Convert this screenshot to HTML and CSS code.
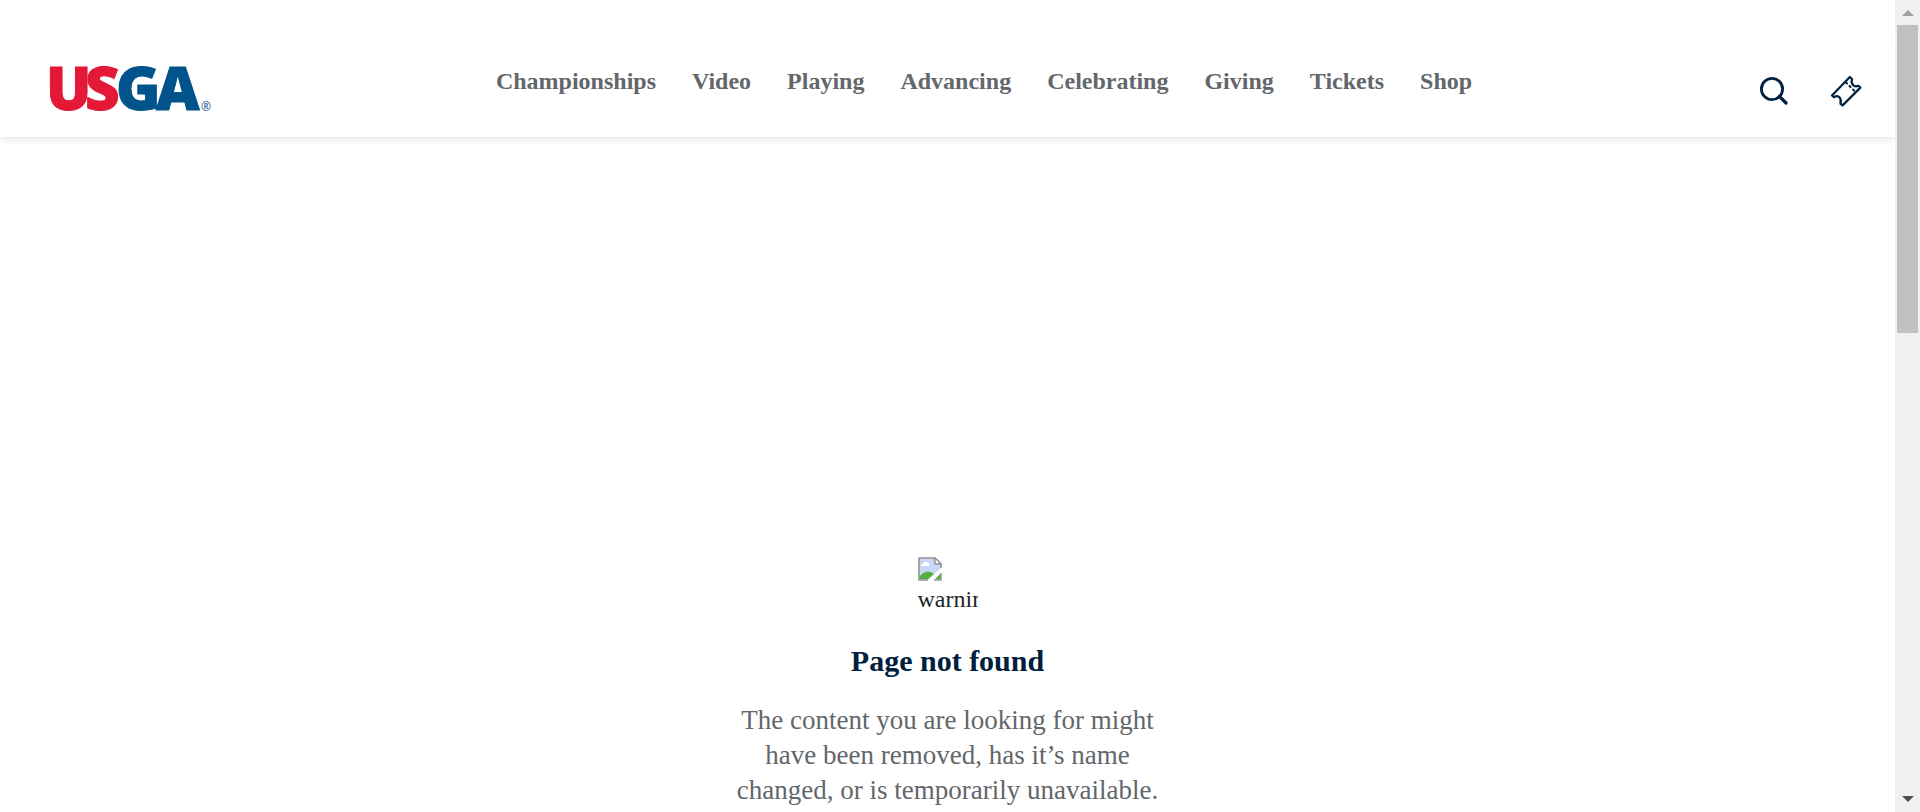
FILE: index.html
```html
<!DOCTYPE html>
<html lang="en">
<head>
<meta charset="utf-8">
<meta name="viewport" content="width=device-width, initial-scale=1">
<title>Page not found | USGA</title>
<link rel="stylesheet" href="styles.css">
</head>
<body>
<div class="page">
  <header class="header">
    <a class="logo" href="#" aria-label="USGA home">
      <svg class="logo-mark" viewBox="0 0 162 48">
        <text class="logo-blue" x="67 107" y="45">GA</text>
        <text class="logo-red" x="-3 36" y="45">US</text>
        <text class="logo-reg" x="152" y="46">®</text>
      </svg>
    </a>
    <nav class="nav" aria-label="Main">
      <a href="#">Championships</a>
      <a href="#">Video</a>
      <a href="#">Playing</a>
      <a href="#">Advancing</a>
      <a href="#">Celebrating</a>
      <a href="#">Giving</a>
      <a href="#">Tickets</a>
      <a href="#">Shop</a>
    </nav>
    <div class="actions">
      <button class="icon-button" type="button" aria-label="Search">
        <svg viewBox="0 0 32 32"><circle cx="14" cy="14" r="10.6" stroke-width="2.8"/><path d="M21.5 21.5 L28 28" stroke-width="3.2"/></svg>
      </button>
      <a class="icon-button" href="#" aria-label="Tickets">
        <svg viewBox="0 0 32 32"><path stroke-width="2.2" d="M19.8 2 L2 20.4 L4 22.2 Q7.4 20.2 9.6 22.4 Q11.6 24.6 10.4 28.6 L12.6 30.4 L30.4 12.6 L28.4 10.8 Q25.2 12.2 23 10 Q20.8 7.6 22 4 Z"/><path stroke-width="2" stroke-dasharray="1.5 3.5" d="M16 7.5 L24.5 16"/></svg>
      </a>
    </div>
  </header>
  <main class="message">
    <div class="missing" role="img" aria-label="warning">
      <svg class="missing-icon" viewBox="0 0 24 24">
        <path d="M1 1H17L23 7V23H1Z" fill="#c6d8f6"/>
        <path d="M3 9Q3 7 5 7Q6 4 9 5Q12 6 11 9Z" fill="#fff"/>
        <path d="M2 22V19Q9 11 16 17L10 22Z" fill="#55ad3c"/>
        <path d="M17 22L22 17V22Z" fill="#55ad3c"/>
        <path d="M9 24L24 10V15L15 24Z" fill="#fff"/>
        <path d="M10 23H1V1H17L23 7V11M23 16V23H16" fill="none" stroke="#949494" stroke-width="1.6"/>
        <path d="M17 1V7H23Z" fill="#fff" stroke="#949494" stroke-width="1.4"/>
      </svg>
      <span class="missing-text">warning</span>
    </div>
    <h1 class="title">Page not found</h1>
    <p class="copy">The content you are looking for might have been removed, has it’s name changed, or is temporarily unavailable.</p>
  </main>
</div>
<div class="scrollbar" aria-hidden="true">
  <svg class="arrow arrow-up" viewBox="0 0 12 6"><path d="M6 0L12 6H0Z"/></svg>
  <div class="track"><div class="thumb"></div></div>
  <svg class="arrow" viewBox="0 0 12 6"><path d="M0 0H12L6 6Z"/></svg>
</div>
</body>
</html>
```

FILE: styles.css
```css
* { box-sizing: border-box; }

body {
  margin: 0;
  height: 100vh;
  overflow: hidden;
  display: grid;
  grid-template-columns: minmax(0, 1fr) 25px;
  background: #fff;
  color: #212529;
  font: 24px/36px "Liberation Serif", "Times New Roman", serif;
}

a { color: inherit; text-decoration: none; }

.page { min-height: 0; overflow: hidden; padding-top: 41px; }

.header {
  display: grid;
  grid-template-columns: 1fr auto 1fr;
  align-items: center;
  height: 96px;
  padding: 0 33px 0 49px;
  box-shadow: 0 3px 6px rgba(0, 0, 0, 0.09);
}

.logo { display: block; }
.logo-mark { display: block; width: 162px; height: 48px; overflow: visible; }
.logo-mark text { font-family: "Open Sans", sans-serif; font-weight: 800; font-size: 60px; }
.logo-mark .logo-red { fill: #e31937; stroke: #e31937; }
.logo-mark .logo-blue { fill: #00538b; stroke: #00538b; }
.logo-mark .logo-reg { fill: #00538b; font-size: 12px; font-weight: 400; }

.nav {
  display: flex;
  gap: 36px;
  padding: 0 0 16px 57px;
  color: #63666a;
  font-weight: 700;
}

.actions {
  display: flex;
  justify-content: flex-end;
  gap: 40px;
  padding-top: 4px;
}

.icon-button {
  display: block;
  width: 32px;
  height: 32px;
  padding: 0;
  border: 0;
  background: none;
}
.icon-button svg {
  display: block;
  width: 32px;
  height: 32px;
  fill: none;
  stroke: #00213e;
  stroke-linejoin: round;
  stroke-linecap: round;
}

.message {
  display: flex;
  flex-direction: column;
  align-items: center;
  padding-top: 420px;
  text-align: center;
}

.missing { width: 60px; height: 60px; overflow: hidden; text-align: left; }
.missing-icon { display: block; width: 24px; height: 24px; }
.missing-text { display: block; line-height: 36px; }

.title {
  margin: 24px 0 22px;
  color: #00213e;
  font-size: 30px;
  line-height: 40px;
}

.copy {
  max-width: 440px;
  margin: 0;
  color: #63666a;
  font-size: 27px;
  line-height: 35px;
}

.scrollbar {
  display: flex;
  flex-direction: column;
  align-items: center;
  padding: 10px 2px;
  background: #f0f0f0;
}
.arrow { width: 12px; height: 6px; fill: #505050; }
.arrow-up { fill: #a0a0a0; }
.track { flex: 1; width: 100%; padding-top: 9px; }
.thumb { height: 40%; background: #c1c1c1; }
```
